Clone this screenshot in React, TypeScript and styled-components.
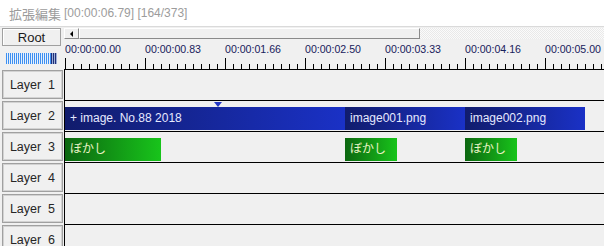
import styled, { createGlobalStyle } from 'styled-components'

const GlobalStyle = createGlobalStyle`
  html, body {
    margin: 0;
    padding: 0;
    background: #f0f0f0;
  }
  body {
    font-family: "Liberation Sans", "Noto Sans CJK JP", sans-serif;
  }
`

const Window = styled.div`
  width: 604px;
  height: 246px;
  overflow: hidden;
  background: #f0f0f0;
  display: flex;
  flex-direction: column;
`

const TitleBar = styled.div`
  height: 26px;
  flex-shrink: 0;
  background: #fff;
  border-bottom: 1px solid #dadada;
  padding-left: 9px;
  display: flex;
  align-items: center;
  gap: 3px;
  color: #9c9c9c;
  font-size: 12px;
  white-space: nowrap;
`

const TitleName = styled.span`
  font-size: 13px;
`

const Header = styled.div`
  height: 42px;
  flex-shrink: 0;
  display: flex;
`

const Side = styled.div`
  width: 64px;
  flex-shrink: 0;
  display: flex;
  flex-direction: column;
`

const RootButton = styled.div`
  margin: 1px 0 0 2px;
  width: 59px;
  height: 18px;
  box-sizing: border-box;
  border: 1px solid #a0a0a0;
  box-shadow: inset 1px 1px 0 #fff;
  display: flex;
  align-items: center;
  justify-content: center;
  font-size: 13px;
  color: #1a1a1a;
`

const Wave = styled.div`
  margin: 7px 0 0 6px;
  width: 51px;
  height: 11px;
  display: flex;
`

const WavePart = styled.div<{ $dark?: boolean }>`
  height: 100%;
  flex: ${(p) => (p.$dark ? '0 0 6px' : '1')};
  background: repeating-linear-gradient(
    90deg,
    ${(p) => (p.$dark ? '#1f2f78' : '#3d8ff0')} 0 1px,
    ${(p) => (p.$dark ? '#9fb0d8' : '#e6f0fc')} 1px 2px
  );
`

const TimeHead = styled.div`
  flex: 1;
  display: flex;
  flex-direction: column;
`

const ScrollBar = styled.div`
  margin-top: 1px;
  height: 11px;
  display: flex;
`

const Raised = styled.div`
  box-sizing: border-box;
  height: 100%;
  background: #f0f0f0;
  border-top: 1px solid #fff;
  border-left: 1px solid #fff;
  border-right: 1px solid #8a8a8a;
  border-bottom: 1px solid #8a8a8a;
`

const ArrowButton = styled(Raised)`
  width: 15px;
  display: flex;
  align-items: center;
  justify-content: center;

  &::before {
    content: '';
    border-top: 3px solid transparent;
    border-bottom: 3px solid transparent;
    border-right: 3px solid #000;
  }
`

const Thumb = styled(Raised)`
  width: 341px;
`

const Track = styled.div`
  flex: 1;
  height: 100%;
  background: repeating-conic-gradient(#fbfbfb 0 25%, #e9e9e9 0 50%) 0 0 / 2px 2px;
`

const Ruler = styled.div`
  flex: 1;
  display: flex;
  flex-direction: column;
  justify-content: space-between;
`

const Labels = styled.div`
  display: flex;
  padding-left: 1px;
  margin-top: 4px;
`

const Label = styled.div`
  width: 80px;
  flex-shrink: 0;
  font-size: 10.6px;
  line-height: 12px;
  color: #18215c;
  white-space: nowrap;
`

const Ticks = styled.svg`
  display: block;
`

const LayerRow = styled.div`
  height: 31px;
  flex-shrink: 0;
  display: flex;
`

const LayerHeader = styled.div`
  width: 61px;
  height: 29px;
  margin: 1px 1px 0 2px;
  box-sizing: border-box;
  border: 1px solid #a0a0a0;
  box-shadow: inset 0 0 0 1px #d2d2d2;
  display: flex;
  align-items: center;
  justify-content: center;
  font-size: 12.5px;
  color: #262626;
  white-space: pre;
`

const LayerTrack = styled.div`
  flex: 1;
  position: relative;
  box-sizing: border-box;
  border-top: 1px solid #000;
  border-left: 1px solid #000;
`

const Clip = styled.div<{ $from: string; $to: string; $ink: string }>`
  position: absolute;
  top: 6px;
  height: 23px;
  box-sizing: border-box;
  padding-left: 5px;
  background: linear-gradient(90deg, ${(p) => p.$from}, ${(p) => p.$to});
  color: ${(p) => p.$ink};
  font-size: 12px;
  line-height: 23px;
  white-space: nowrap;
  overflow: hidden;
`

const Marker = styled.div`
  position: absolute;
  top: 1px;
  left: 149px;
  width: 0;
  height: 0;
  border-left: 4px solid transparent;
  border-right: 4px solid transparent;
  border-top: 5px solid #2336c4;
`

type ClipData = { left: number; width: number; text: string; kind: 'image' | 'filter' }

const palette = {
  image: { from: '#111c6c', to: '#1a31c6', ink: '#e6e9ff' },
  filter: { from: '#0c6710', to: '#18c41b', ink: '#eaf3c6' },
}

const layers: ClipData[][] = [
  [],
  [
    { left: 0, width: 280, text: '+ image. No.88 2018', kind: 'image' },
    { left: 280, width: 120, text: 'image001.png', kind: 'image' },
    { left: 400, width: 120, text: 'image002.png', kind: 'image' },
  ],
  [
    { left: 0, width: 96, text: 'ぼかし', kind: 'filter' },
    { left: 280, width: 52, text: 'ぼかし', kind: 'filter' },
    { left: 400, width: 52, text: 'ぼかし', kind: 'filter' },
  ],
  [],
  [],
  [],
]

const times = ['00:00:00.00', '00:00:00.83', '00:00:01.66', '00:00:02.50', '00:00:03.33', '00:00:04.16', '00:00:05.00']

export default function App() {
  const ticks = Array.from({ length: 68 }, (_, i) => i)
  return (
    <Window>
      <GlobalStyle />
      <TitleBar>
        <TitleName>拡張編集</TitleName>
        <span>[00:00:06.79] [164/373]</span>
      </TitleBar>
      <Header>
        <Side>
          <RootButton>Root</RootButton>
          <Wave>
            <WavePart />
            <WavePart $dark />
          </Wave>
        </Side>
        <TimeHead>
          <ScrollBar>
            <ArrowButton />
            <Thumb />
            <Track />
          </ScrollBar>
          <Ruler>
            <Labels>
              {times.map((t) => (
                <Label key={t}>{t}</Label>
              ))}
            </Labels>
            <Ticks width={540} height={11}>
              {ticks.map((i) => {
                const x = 1.5 + i * 8
                return <line key={i} x1={x} x2={x} y1={i % 10 === 0 ? 0 : 6} y2={11} stroke="#000" strokeWidth={1} />
              })}
            </Ticks>
          </Ruler>
        </TimeHead>
      </Header>
      {layers.map((clips, index) => (
        <LayerRow key={index}>
          <LayerHeader>{`Layer  ${index + 1}`}</LayerHeader>
          <LayerTrack>
            {index === 1 && <Marker />}
            {clips.map((c, k) => {
              const col = palette[c.kind]
              return (
                <Clip key={k} $from={col.from} $to={col.to} $ink={col.ink} style={{ left: c.left, width: c.width }}>
                  {c.text}
                </Clip>
              )
            })}
          </LayerTrack>
        </LayerRow>
      ))}
    </Window>
  )
}
